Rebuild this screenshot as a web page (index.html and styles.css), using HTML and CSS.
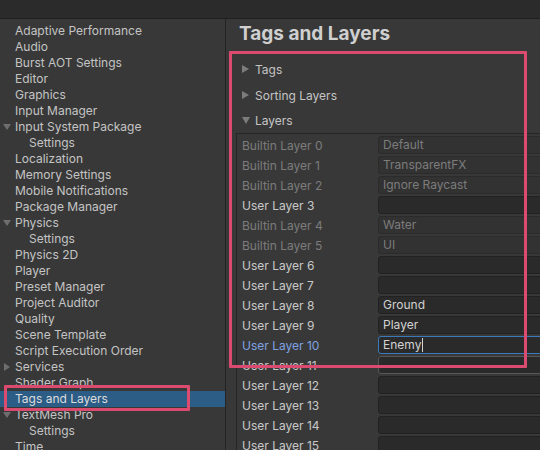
FILE: index.html
```html
<!DOCTYPE html>
<html lang="en">
<head>
    <meta charset="UTF-8">
    <title>Project Settings</title>
    <link rel="stylesheet" href="styles.css">
</head>
<body>
    <div class="toolbar"></div>

    <div class="window">
        <div class="sidebar">
            <div class="tree-item"><span class="toggle"></span>Adaptive Performance</div>
            <div class="tree-item"><span class="toggle"></span>Audio</div>
            <div class="tree-item"><span class="toggle"></span>Burst AOT Settings</div>
            <div class="tree-item"><span class="toggle"></span>Editor</div>
            <div class="tree-item"><span class="toggle"></span>Graphics</div>
            <div class="tree-item"><span class="toggle"></span>Input Manager</div>
            <div class="tree-item"><span class="toggle open"></span>Input System Package</div>
            <div class="tree-item child"><span class="toggle"></span>Settings</div>
            <div class="tree-item"><span class="toggle"></span>Localization</div>
            <div class="tree-item"><span class="toggle"></span>Memory Settings</div>
            <div class="tree-item"><span class="toggle"></span>Mobile Notifications</div>
            <div class="tree-item"><span class="toggle"></span>Package Manager</div>
            <div class="tree-item"><span class="toggle open"></span>Physics</div>
            <div class="tree-item child"><span class="toggle"></span>Settings</div>
            <div class="tree-item"><span class="toggle"></span>Physics 2D</div>
            <div class="tree-item"><span class="toggle"></span>Player</div>
            <div class="tree-item"><span class="toggle"></span>Preset Manager</div>
            <div class="tree-item"><span class="toggle"></span>Project Auditor</div>
            <div class="tree-item"><span class="toggle"></span>Quality</div>
            <div class="tree-item"><span class="toggle"></span>Scene Template</div>
            <div class="tree-item"><span class="toggle"></span>Script Execution Order</div>
            <div class="tree-item"><span class="toggle closed"></span>Services</div>
            <div class="tree-item"><span class="toggle"></span>Shader Graph</div>
            <div class="tree-item selected"><span class="toggle"></span>Tags and Layers</div>
            <div class="tree-item"><span class="toggle open"></span>TextMesh Pro</div>
            <div class="tree-item child"><span class="toggle"></span>Settings</div>
            <div class="tree-item"><span class="toggle"></span>Time</div>
        </div>

        <div class="inspector">
            <h1 class="title">Tags and Layers</h1>

            <div class="foldout"><span class="arrow"></span>Tags</div>
            <div class="foldout"><span class="arrow"></span>Sorting Layers</div>
            <div class="foldout expanded"><span class="arrow"></span>Layers</div>

            <div class="layers">
                <div class="layer builtin"><span class="layer-label">Builtin Layer 0</span><span class="field">Default</span></div>
                <div class="layer builtin"><span class="layer-label">Builtin Layer 1</span><span class="field">TransparentFX</span></div>
                <div class="layer builtin"><span class="layer-label">Builtin Layer 2</span><span class="field">Ignore Raycast</span></div>
                <div class="layer"><span class="layer-label">User Layer 3</span><span class="field"></span></div>
                <div class="layer builtin"><span class="layer-label">Builtin Layer 4</span><span class="field">Water</span></div>
                <div class="layer builtin"><span class="layer-label">Builtin Layer 5</span><span class="field">UI</span></div>
                <div class="layer"><span class="layer-label">User Layer 6</span><span class="field"></span></div>
                <div class="layer"><span class="layer-label">User Layer 7</span><span class="field"></span></div>
                <div class="layer"><span class="layer-label">User Layer 8</span><span class="field">Ground</span></div>
                <div class="layer"><span class="layer-label">User Layer 9</span><span class="field">Player</span></div>
                <div class="layer focused"><span class="layer-label">User Layer 10</span><span class="field">Enemy<span class="caret"></span></span></div>
                <div class="layer hover"><span class="layer-label">User Layer 11</span><span class="field"></span></div>
                <div class="layer"><span class="layer-label">User Layer 12</span><span class="field"></span></div>
                <div class="layer"><span class="layer-label">User Layer 13</span><span class="field"></span></div>
                <div class="layer"><span class="layer-label">User Layer 14</span><span class="field"></span></div>
                <div class="layer"><span class="layer-label">User Layer 15</span><span class="field"></span></div>
            </div>
        </div>
    </div>

    <!-- highlight boxes drawn over the window -->
    <div class="mark mark-side"></div>
    <div class="mark mark-main"></div>
</body>
</html>
```

FILE: styles.css
```css
body {
    margin: 0;
    width: 540px;
    height: 450px;
    position: relative;
    overflow: hidden;
    background-color: #383838;
    color: #c4c4c4;
    font-family: Inter, "Noto Sans", sans-serif;
    font-size: 12px;
}

.toolbar {
    height: 18px;
    background-color: #2b2b2b;
    border-bottom: 1px solid #1f1f1f;
}

.window {
    display: flex;
    height: 431px;
}

/* left tree */
.sidebar {
    width: 226px;
    flex-shrink: 0;
    padding-top: 4px;
    border-right: 1px solid #242424;
    box-sizing: border-box;
}

.tree-item {
    height: 16px;
    line-height: 16px;
    padding-left: 3px;
    display: flex;
    align-items: center;
    white-space: nowrap;
}

.tree-item.child {
    padding-left: 17px;
}

.tree-item.selected {
    background-color: #2c5d87;
    color: #dcdcdc;
}

.toggle {
    width: 12px;
    height: 16px;
    flex-shrink: 0;
    position: relative;
}

.toggle.open::before {
    content: "";
    position: absolute;
    left: 0;
    top: 5px;
    border-left: 4px solid transparent;
    border-right: 4px solid transparent;
    border-top: 6px solid #6e6e6e;
}

.toggle.closed::before {
    content: "";
    position: absolute;
    left: 1px;
    top: 4px;
    border-top: 4px solid transparent;
    border-bottom: 4px solid transparent;
    border-left: 6px solid #6e6e6e;
}

/* right panel */
.inspector {
    flex: 1;
    padding-left: 13px;
    overflow: hidden;
}

.title {
    margin: 0;
    padding-top: 2px;
    height: 26px;
    line-height: 26px;
    font-size: 19px;
    font-weight: 700;
    color: #cfcfcf;
    margin-bottom: 9px;
}

.foldout {
    height: 26px;
    display: flex;
    align-items: center;
    padding-left: 3px;
    gap: 6px;
}

.foldout.expanded {
    height: 25px;
}

.arrow {
    width: 0;
    height: 0;
    border-top: 4px solid transparent;
    border-bottom: 4px solid transparent;
    border-left: 7px solid #7c7c7c;
}

.foldout.expanded .arrow {
    border-left: 4px solid transparent;
    border-right: 4px solid transparent;
    border-top: 7px solid #7c7c7c;
    border-bottom: none;
    margin-right: -1px;
}

.layers {
    margin-left: -3px;
    padding-top: 1px;
    padding-left: 5px;
    border-top: 1px solid #262626;
    border-left: 1px solid #262626;
}

.layer {
    height: 20px;
    display: flex;
    align-items: center;
    white-space: nowrap;
}

.layer-label {
    width: 136px;
    flex-shrink: 0;
    color: #c8c8c8;
}

.field {
    width: 200px;
    height: 18px;
    box-sizing: border-box;
    flex-shrink: 0;
    padding-left: 4px;
    line-height: 16px;
    background-color: #2a2a2a;
    border: 1px solid #212121;
    border-radius: 3px;
    color: #d2d2d2;
    display: flex;
    align-items: center;
}

.layer.builtin .layer-label,
.layer.builtin .field {
    color: #7c7c7c;
}

.layer.builtin .field {
    background-color: #323232;
    border-color: #2b2b2b;
}

.layer.focused .layer-label {
    color: #7fa2e0;
}

.layer.focused .field {
    border-color: #3a79bb;
    background-color: #2a2a2a;
}

.layer.hover .field {
    border-color: #575757;
}

.caret {
    width: 1px;
    height: 14px;
    margin-left: 1px;
    background-color: #d2d2d2;
}

/* pink annotation boxes */
.mark {
    position: absolute;
    border: 3px solid #db4a6f;
    border-radius: 1px;
    pointer-events: none;
}

.mark-side {
    left: 4px;
    top: 385px;
    width: 180px;
    height: 20px;
}

.mark-main {
    left: 229px;
    top: 51px;
    width: 292px;
    height: 311px;
}
```
